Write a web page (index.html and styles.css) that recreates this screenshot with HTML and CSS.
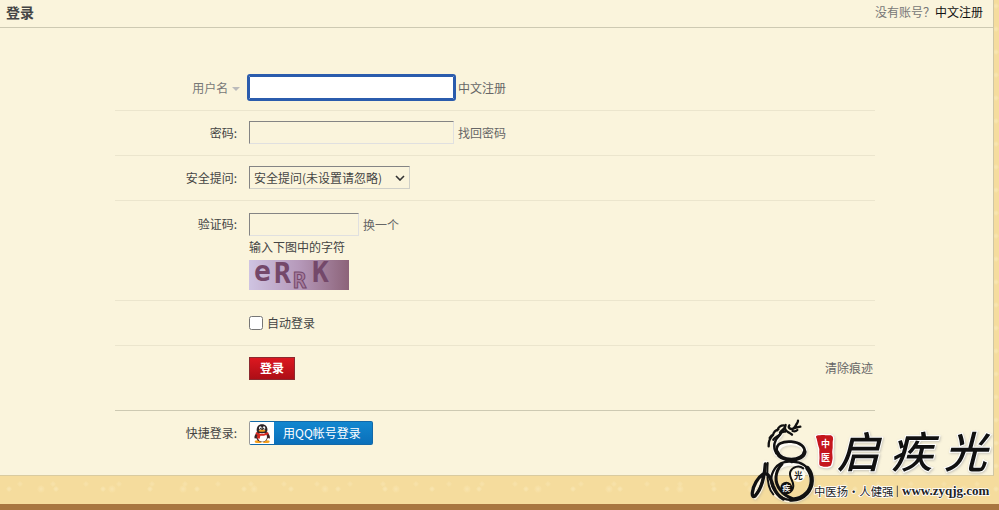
FILE: index.html
```html
<!DOCTYPE html>
<html lang="zh-CN">
<head>
    <meta charset="UTF-8">
    <meta name="viewport" content="width=device-width, initial-scale=1.0">
    <title>登录</title>
    <link rel="stylesheet" href="styles.css">
</head>
<body>
    <main class="panel">
        <header class="panel-head">
            <h1>登录</h1>
            <p>没有账号？<a href="#">中文注册</a></p>
        </header>

        <form class="login">
            <div class="row">
                <label class="name name-type" for="username">用户名 <span class="caret"></span></label>
                <div class="field">
                    <input class="text active" type="text" id="username">
                    <a href="#">中文注册</a>
                </div>
            </div>
            <div class="row">
                <label class="name" for="password">密码:</label>
                <div class="field">
                    <input class="text" type="password" id="password">
                    <a href="#">找回密码</a>
                </div>
            </div>
            <div class="row">
                <label class="name" for="question">安全提问:</label>
                <div class="field">
                    <span class="select-box">
                        <select id="question">
                            <option>安全提问(未设置请忽略)</option>
                        </select>
                        <svg class="chevron" width="10" height="6" viewBox="0 0 10 6"><path d="M1 1l4 4 4-4" fill="none" stroke="#333" stroke-width="1.6"/></svg>
                    </span>
                </div>
            </div>
            <div class="row row-code">
                <label class="name" for="code">验证码:</label>
                <div>
                    <div class="field">
                        <input class="text short" type="text" id="code">
                        <a href="#">换一个</a>
                    </div>
                    <p class="tip">输入下图中的字符</p>
                    <svg class="captcha" width="100" height="30" viewBox="0 0 100 30">
                        <defs>
                            <linearGradient id="haze">
                                <stop offset="0" stop-color="#cfc4e2"/>
                                <stop offset=".5" stop-color="#b699ba"/>
                                <stop offset="1" stop-color="#8c6379"/>
                            </linearGradient>
                        </defs>
                        <rect width="100" height="30" fill="url(#haze)"/>
                        <g class="captcha-text">
                            <text x="5" y="21" font-size="28">e</text>
                            <text x="25" y="23" font-size="28">R</text>
                            <text class="hollow" x="44" y="28" font-size="22">R</text>
                            <text x="63" y="22" font-size="28">K</text>
                        </g>
                    </svg>
                </div>
            </div>
            <div class="row">
                <span></span>
                <div class="field">
                    <input class="check" type="checkbox" id="auto">
                    <label for="auto">自动登录</label>
                </div>
            </div>
            <div class="row row-submit">
                <span></span>
                <div class="field">
                    <button class="submit" type="submit">登录</button>
                    <a class="clear" href="#">清除痕迹</a>
                </div>
            </div>
        </form>

        <div class="row quick">
            <span class="name">快捷登录:</span>
            <div class="field">
                <a class="qq" href="#">
                    <svg class="penguin" width="24" height="22" viewBox="0 0 72 66">
                        <ellipse cx="25" cy="59" rx="11" ry="4" fill="#f5a01c"/>
                        <ellipse cx="48" cy="59" rx="11" ry="4" fill="#f5a01c"/>
                        <path d="M22 31C14 38 11 46 15 50c3 0 5-4 7-7zM51 31c8 7 11 15 7 19-3 0-5-4-7-7z" fill="#3a2022"/>
                        <ellipse cx="36" cy="42" rx="19" ry="18" fill="#42272a"/>
                        <ellipse cx="37" cy="45" rx="14" ry="14" fill="#fff"/>
                        <path d="M20 28C19 14 26 7 36 7s18 7 16 21c-5 8-27 8-32 0z" fill="#2b2226"/>
                        <ellipse cx="31" cy="18" rx="4" ry="5" fill="#fff"/>
                        <ellipse cx="42" cy="18" rx="4" ry="5" fill="#fff"/>
                        <circle cx="32" cy="19" r="2" fill="#111"/>
                        <circle cx="41" cy="19" r="2" fill="#111"/>
                        <ellipse cx="36" cy="26" rx="10" ry="3" fill="#f5a01c"/>
                        <path d="M18 30c10 7 26 7 36 0l2 6c-8 5-17 6-25 5l-2 9-8-1 1-10-5-3z" fill="#d8281f"/>
                    </svg>
                    <span>用QQ帐号登录</span>
                </a>
            </div>
        </div>
    </main>

    <footer class="ground"></footer>

    <svg class="brand" width="246" height="88" viewBox="30 36 738 264">
        <g class="halo" fill="none" stroke="#fff" stroke-linecap="round" stroke-width="15">
            <path d="M121 88c-18 18-21 40-12 57"/>
            <ellipse cx="153" cy="139" rx="41" ry="26"/>
            <ellipse cx="154" cy="230" rx="62" ry="55"/>
            <path d="M76 174c-2 44-14 85-31 101-17-9 9-57 35-69"/>
        </g>
        <g fill="none" stroke="#111" stroke-linecap="round" stroke-linejoin="round">
            <!-- dragon head and whiskers -->
            <path stroke-width="7" d="M86 124c-1-14 5-26 13-34M99 90c-6 0-7 5-10 9M99 90c2-9 8-15 16-17M112 76c3-9 10-15 19-15 5 0 6 5 2 9-5 5-11 7-13 13M100 104c6-9 14-9 20-16 4-6 8-10 15-8"/>
            <path stroke-width="7" d="M137 60c-5 8-2 15 5 20 5 4 10 5 14 9M148 61c-5 7 3 13 11 10 7-4 8-10 11-14 3-5 4-6 4-10M159 71c7-4 13-4 22-6M158 78c5 2 10 1 14-3"/>
            <!-- body coils -->
            <path stroke-width="7" d="M121 88c-18 17-23 38-12 57"/>
            <path stroke-width="8" d="M110 137c-2-20 17-29 44-27 26 2 42 15 40 31"/>
            <path stroke-width="12" d="M111 141c6 15 23 23 43 23 21 0 38-9 40-24"/>
            <path stroke-width="7" d="M154 170c-21-2-39 6-49 20-16 23-15 51 2 71 11 14 27 23 46 24"/>
            <path stroke-width="9" d="M126 177c-22 23-24 55-5 78 9 12 21 20 35 25"/>
            <path stroke-width="7" d="M154 171c29-3 52 14 59 37"/>
            <path stroke-width="13" d="M202 189c19 23 17 56-2 76-13 14-29 20-48 19"/>
            <path stroke-width="6" d="M190 190c-13-10-33-5-39 10-6 17 10 26 9 43-1 16-15 26-30 20"/>
            <!-- tail loop -->
            <path stroke-width="10" d="M76 177c-3 39-14 79-31 96-6 4-9-1-8-10 3-22 16-45 33-56 17-6 22 15 30 37 7 18 16 31 30 38"/>
            <path stroke-width="6" d="M83 174c-3 40-2 75 17 94M69 218c-2 14-9 32-19 47"/>
        </g>
        <!-- inner discs -->
        <circle cx="175" cy="211" r="20" fill="#fffbf0"/>
        <circle cx="139" cy="248" r="18" fill="#111"/>
        <text class="seal-sm" x="162" y="221" font-size="26">光</text>
        <text class="seal-sm light" x="127" y="257" font-size="24">疾</text>
        <!-- red seal -->
        <path class="ink" d="M228 101c-6-8 1-13 10-12 9-4 19 2 29-1 10 0 16 7 14 16-3 12 1 20-2 31-2 11 3 20 0 30-2 12-2 20-11 21-9 3-19 1-25-1-10-1-7-10-7-17 2-11-1-22 0-32 1-8-5-14-5-22z" fill="#c5161d" stroke="#fff" stroke-width="4"/>
        <text class="seal" x="243" y="127" font-size="27">中</text>
        <text class="seal" x="243" y="168" font-size="27">医</text>
        <g class="ink brush">
            <text x="290" y="188" font-size="129">启</text>
            <text x="450" y="188" font-size="129">疾</text>
            <text x="612" y="188" font-size="129">光</text>
        </g>
        <text class="slogan" x="222" y="273" font-size="34">中医扬·人健强</text>
        <path d="M472 242v34" stroke="#555" stroke-width="3"/>
        <text class="site" x="486" y="271" font-size="39">www.zyqjg.com</text>
    </svg>
</body>
</html>
```
FILE: styles.css
```css
* { box-sizing: border-box; }
body {
    display: flex;
    flex-direction: column;
    position: relative;
    min-height: 100vh;
    margin: 0;
    font: 12px/18px "Noto Sans CJK SC", sans-serif;
    color: #444;
    background-color: #f5dc9d;
    background-image: radial-gradient(circle at 9px 6px, #f8e4ae 1px, transparent 3px), radial-gradient(circle at 41px 14px, #f8e3ac 1px, transparent 4px), radial-gradient(circle at 20px 20px, #f7e1a8 1px, transparent 3px);
    background-size: 47px 23px, 71px 19px, 33px 29px;
}
h1, p { margin: 0; }
a { color: #666; text-decoration: none; }
input, select, button { margin: 0; font: inherit; color: inherit; }

.panel {
    margin-right: 5px;
    padding-bottom: 20px;
    background: #faf4dc;
    border-right: 1px solid #cfc6a5;
    border-bottom: 1px solid #d9cba0;
}
.panel-head {
    display: flex;
    justify-content: space-between;
    align-items: center;
    height: 28px;
    padding: 0 10px 4px 6px;
    border-bottom: 1px solid #cdc9b2;
}
.panel-head h1 { font-size: 14px; line-height: 20px; }
.panel-head p { color: #777; }
.panel-head a { color: #111; }

.login, .quick { max-width: 760px; margin-left: 115px; }
.login { padding-top: 38px; }
.row {
    display: grid;
    grid-template-columns: 134px 1fr;
    align-items: center;
    min-height: 45px;
    padding-bottom: 1px;
    border-bottom: 1px solid #ebe5cd;
}
.name { padding-right: 12px; text-align: right; }
.name-type { padding-right: 9px; color: #777; }
.caret {
    display: inline-block;
    margin-left: 1px;
    vertical-align: 2px;
    border: 4px solid transparent;
    border-top-color: #bbb;
    border-bottom: 0;
}
.field { display: flex; align-items: center; gap: 4px; }
.text {
    width: 205px;
    height: 23px;
    padding: 2px 4px;
    background: transparent;
    border: 1px solid;
    border-color: #848484 #e0e0e0 #e0e0e0 #848484;
}
.active {
    background: #fff;
    border-color: #2b5cad;
    border-radius: 1px;
    outline: 2px solid #2b5cad;
}
.short { width: 110px; }

.select-box { position: relative; }
select {
    display: block;
    width: 161px;
    height: 23px;
    padding: 0 4px;
    appearance: none;
    background: transparent;
    border: 1px solid;
    border-color: #848484 #d0d0c8 #d0d0c8 #848484;
    border-radius: 0;
}
.chevron { position: absolute; right: 5px; top: 9px; pointer-events: none; }

.row-code { align-items: start; padding: 12px 0 10px; }
.row-code .name { line-height: 22px; }
.tip { margin: 2px 0 4px; }
.captcha { display: block; overflow: visible; }
.captcha-text { font-family: "DejaVu Sans Mono", monospace; font-weight: bold; fill: #74486a; }
.hollow { fill: #a77e9f; stroke: #74486a; stroke-width: 1px; }

.check { width: 14px; height: 14px; }
.row-submit { border-bottom: 0; }
.submit {
    width: 46px;
    height: 23px;
    padding: 0;
    line-height: 20px;
    font-weight: bold;
    color: #fff;
    background: linear-gradient(#dc1820, #ad0e16);
    border: 1px solid #8b2a30;
}
.clear { margin-left: auto; padding-right: 2px; }
.quick { margin-top: 19px; border-top: 1px solid #cdc9b2; border-bottom: 0; }
.qq {
    display: flex;
    width: 124px;
    height: 24px;
    line-height: 22px;
    color: #fff;
    background: linear-gradient(#1287cf, #0a6fba);
    border: 1px solid #1268a8;
    border-left-color: #999;
    border-radius: 2px;
}
.qq span { padding-left: 9px; }
.penguin { background: #fff; }

.ground { height: 6px; margin-top: auto; background: #a87640; }

.brand { position: absolute; right: 3px; bottom: 5px; }
.ink { filter: drop-shadow(2px 3px 3px #9998); }
.halo { opacity: .7; filter: drop-shadow(2px 3px 3px #9998); }
.brush, .seal, .seal-sm, .slogan { font-family: "Noto Sans CJK SC", sans-serif; }
.brush { font-style: italic; font-weight: 500; fill: #111; stroke: #fff; stroke-width: 6px; paint-order: stroke; }
.seal { font-weight: bold; fill: #fff; }
.seal-sm { font-weight: bold; fill: #222; }
.light { fill: #eee; }
.slogan, .site { fill: #222; stroke: #fff; stroke-width: 5px; paint-order: stroke; }
.site { font-family: "Liberation Serif", serif; font-weight: bold; }
```
